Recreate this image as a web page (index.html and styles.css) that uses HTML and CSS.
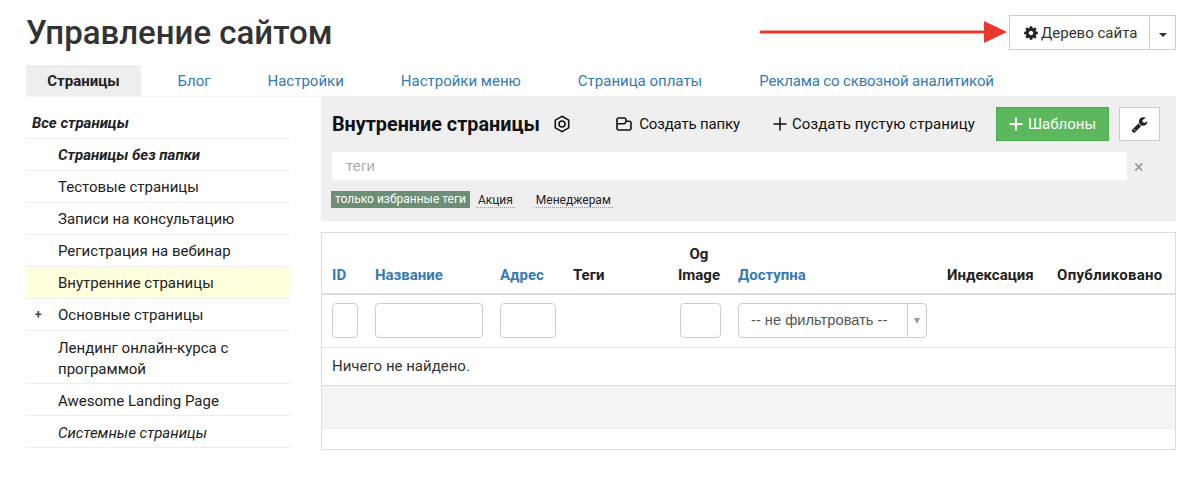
FILE: index.html
```html
<!DOCTYPE html>
<html lang="ru">
<head>
<meta charset="utf-8">
<title>Управление сайтом</title>
<link rel="stylesheet" href="styles.css">
</head>
<body>
<div class="page">
  <header class="top">
    <h1>Управление сайтом</h1>
    <div class="split">
      <a class="split-main"><svg class="gear" viewBox="0 0 1792 1792"><path d="M1152 896q0-106-75-181t-181-75-181 75-75 181 75 181 181 75 181-75 75-181zm512-109v222q0 12-8 23t-20 13l-185 28q-19 54-39 91 35 50 107 138 10 12 10 25t-9 23q-27 37-99 108t-94 71q-12 0-26-9l-138-108q-44 23-91 38-16 136-29 186-7 28-36 28h-222q-14 0-24.500-8.500t-11.500-21.500l-28-184q-49-16-90-37l-141 107q-10 9-25 9-14 0-25-11-126-114-165-168-7-10-7-23 0-12 8-23 15-21 51-66.500t54-70.500q-27-50-41-99l-183-27q-13-2-21-12.500t-8-23.500v-222q0-12 8-23t19-13l186-28q14-46 39-92-40-57-107-138-10-12-10-24 0-10 9-23 26-36 98.500-107.500t94.500-71.500q13 0 26 10l138 107q44-23 91-38 16-136 29-186 7-28 36-28h222q14 0 24.500 8.500t11.500 21.500l28 184q49 16 90 37l142-107q9-9 24-9 13 0 25 10 129 119 165 170 7 8 7 22 0 12-8 23-15 21-51 66.500t-54 70.500q26 50 41 98l183 28q13 2 21 12.500t8 23.500z"/></svg>Дерево сайта</a>
      <a class="split-caret"><span class="caret"></span></a>
    </div>
    <svg class="arrow" viewBox="0 0 250 26"><path d="M2 13H226" stroke="#e8392e" stroke-width="3" stroke-linecap="round"/><path d="M225 2L248 13L225 24Z" fill="#e8392e"/></svg>
  </header>

  <nav class="tabs">
    <a class="tab active">Страницы</a>
    <a class="tab">Блог</a>
    <a class="tab">Настройки</a>
    <a class="tab">Настройки меню</a>
    <a class="tab">Страница оплаты</a>
    <a class="tab narrow">Реклама со сквозной аналитикой</a>
  </nav>

  <div class="layout">
    <aside class="side">
      <a class="row root strong-it">Все страницы</a>
      <a class="row strong-it">Страницы без папки</a>
      <a class="row">Тестовые страницы</a>
      <a class="row">Записи на консультацию</a>
      <a class="row">Регистрация на вебинар</a>
      <a class="row current">Внутренние страницы</a>
      <a class="row"><span class="plus">+</span>Основные страницы</a>
      <a class="row">Лендинг онлайн-курса с программой</a>
      <a class="row">Awesome Landing Page</a>
      <a class="row it">Системные страницы</a>
    </aside>

    <main class="main">
      <section class="panel">
        <div class="panel-head">
          <h2>Внутренние страницы</h2>
          <svg class="hex" viewBox="0 0 18 18" fill="none" stroke="#111" stroke-width="1.6"><path d="M9 1.3L15.7 5.1V12.900L9 16.700L2.300 12.900V5.100Z"/><circle cx="9" cy="9" r="3"/></svg>
          <a class="act first"><svg class="folder" viewBox="0 0 16 14" fill="none" stroke="#111" stroke-width="1.600" stroke-linejoin="round"><path d="M1 11V3Q1 1 3 1H8.500Q9.500 1 9.800 2.200L10.300 4.200H13Q15 4.200 15 6V11Q15 13 13 13H3Q1 13 1 11ZM1 6.800H8Q8.800 6.800 9.200 6L10.300 4.200"/></svg>Создать папку</a>
          <a class="act second"><svg class="cross" viewBox="0 0 14 14" stroke="#111" stroke-width="1.500"><path d="M7 0.500V13.500M0.500 7H13.500"/></svg>Создать пустую страницу</a>
          <a class="btn-green"><svg class="cross-w" viewBox="0 0 14 14" stroke="#fff" stroke-width="2"><path d="M7 0.500V13.500M0.500 7H13.500"/></svg>Шаблоны</a>
          <a class="btn-tool"><svg class="wrench" viewBox="0 0 1792 1792"><path d="M448 1472q0-26-19-45t-45-19-45 19-19 45 19 45 45 19 45-19 19-45zm644-420l-682 682q-37 37-90 37-52 0-91-37l-106-108q-38-36-38-90 0-53 38-91l681-681q39 98 114.500 173.500t173.500 114.500zm634-435q0 39-23 106-47 134-164.500 217.500t-258.500 83.500q-185 0-316.500-131.500t-131.500-316.500 131.500-316.500 316.500-131.500q58 0 121.500 16.500t107.500 46.500q16 11 16 28t-16 28l-293 169v224l193 107q5-3 79-48.500t135.500-81 70.500-35.500q15 0 23.500 10t8.500 25z"/></svg></a>
        </div>
        <div class="search">
          <div class="search-input">теги</div>
          <span class="clear">×</span>
        </div>
        <div class="tags">
          <span class="badge">только избранные теги</span>
          <span class="tag">Акция</span>
          <span class="tag">Менеджерам</span>
        </div>
      </section>

      <section class="grid-box">
        <table>
          <colgroup>
            <col class="c1"><col class="c2"><col class="c3"><col class="c4"><col class="c5"><col class="c6"><col class="c7"><col class="c8">
          </colgroup>
          <thead>
            <tr class="head">
              <th class="link">ID</th>
              <th class="link">Название</th>
              <th class="link">Адрес</th>
              <th>Теги</th>
              <th class="og">Og Image</th>
              <th class="link">Доступна</th>
              <th>Индексация</th>
              <th class="pub">Опубликовано</th>
            </tr>
            <tr class="filters">
              <td><div class="field"></div></td>
              <td><div class="field"></div></td>
              <td><div class="field"></div></td>
              <td></td>
              <td><div class="field"></div></td>
              <td><div class="select"><span class="select-text">-- не фильтровать --</span><span class="select-arrow"><i></i></span></div></td>
              <td></td>
              <td></td>
            </tr>
          </thead>
          <tbody>
            <tr class="empty"><td colspan="8">Ничего не найдено.</td></tr>
          </tbody>
        </table>
        <div class="foot"></div>
      </section>
    </main>
  </div>
</div>
</body>
</html>
```
FILE: styles.css
```css
* { box-sizing: border-box; }
html, body { margin: 0; padding: 0; background: #fff; }
body { font-family: Roboto, "Noto Sans", sans-serif; font-size: 15px; color: #222; }
.page { width: 1200px; height: 483px; padding: 0 24px 0 26px; overflow: hidden; }

.top { position: relative; display: flex; justify-content: space-between; height: 65px; padding-top: 15px; }
h1 { margin: 0; font-size: 33px; line-height: 36px; font-weight: 500; color: #333; }
.split { display: flex; width: 167px; height: 35px; border: 1px solid #ccc; }
.split-main { display: flex; align-items: center; width: 140px; padding-left: 13px; border-right: 1px solid #ccc; color: #333; }
.gear { width: 16px; height: 16px; margin-right: 2px; fill: #222; }
.split-caret { flex: 1; display: flex; align-items: center; justify-content: center; padding-top: 4px; }
.caret { border: 4px solid transparent; border-top-color: #333; border-bottom: 0; }
.arrow { position: absolute; left: 733px; top: 19px; width: 250px; height: 26px; }

.tabs { display: flex; height: 32px; gap: 16px; border-bottom: 1px solid #f3f3f3; }
.tab { display: flex; align-items: center; height: 31px; padding: 0 20.500px; color: #337ab7; }
.tab.active { width: 115px; justify-content: center; padding: 0; background: #eee; color: #222; font-weight: 700; }
.tab.narrow { letter-spacing: -0.15px; }

.layout { display: flex; gap: 31px; }
.side { width: 264px; flex: none; }
.row { position: relative; display: block; padding: 6px 6px 4px 32px; line-height: 21px; border-bottom: 1px solid #eee; color: #222; }
.row:nth-child(n+8) { padding-top: 7px; padding-bottom: 3px; }
.root { padding-left: 6px; padding-top: 16px; padding-bottom: 5px; height: 42px; }
.strong-it { font-style: italic; font-weight: 700; }
.it { font-style: italic; }
.current { background: #ffffdd; }
.plus { position: absolute; left: 9px; top: 6px; font-size: 12px; font-weight: 700; color: #444; }

.main { flex: 1; min-width: 0; }
.panel { height: 124px; background: #efefef; padding: 10px 16px 0 11px; }
.panel-head { display: flex; align-items: center; height: 34px; color: #111; }
h2 { margin: 0; font-size: 19.800px; font-weight: 700; color: #111; }
.hex { width: 18px; height: 18px; margin-left: 13px; }
.act { display: flex; align-items: center; }
.act.first { margin-left: auto; letter-spacing: -0.15px; }
.act.second { margin-left: 33px; letter-spacing: 0.09px; }
.folder { width: 16px; height: 14px; margin-right: 7px; }
.cross { width: 14px; height: 14px; margin-right: 5px; }
.btn-green { display: flex; align-items: center; justify-content: center; width: 113px; height: 34px; margin-left: 21px; background: #5cb85c; border: 1px solid #4cae4c; color: #fff; }
.cross-w { width: 14px; height: 14px; margin-right: 5px; }
.btn-tool { display: flex; align-items: center; justify-content: center; width: 41px; height: 34px; margin-left: 10px; background: #fff; border: 1px solid #ccc; }
.wrench { width: 17px; height: 17px; fill: #222; }

.search { display: flex; align-items: center; height: 28px; margin-top: 11px; }
.search-input { width: 795px; height: 28px; padding-left: 14px; background: #fff; font-family: "Liberation Sans", sans-serif; font-size: 15px; line-height: 28px; color: #aaa; }
.clear { margin-left: 7px; padding-top: 2px; font-size: 18px; line-height: 26px; color: #999; }

.tags { display: flex; align-items: flex-start; margin-top: 11px; margin-left: -1px; font-size: 12px; }
.badge { padding: 0 4px; height: 17px; line-height: 17px; background: #6b8e75; color: #fff; }
.tag { margin-left: 6px; padding: 0 2px; height: 17px; line-height: 19px; color: #222; border-bottom: 1px dotted #999; }
.tag:last-child { margin-left: 19px; }

.grid-box { height: 218px; margin-top: 11px; padding-top: 2px; border: 1px solid #ddd; }
table { width: 100%; table-layout: fixed; border-collapse: collapse; }
.c1 { width: 43px; } .c2 { width: 125px; } .c3 { width: 73px; } .c4 { width: 107px; }
.c5 { width: 58px; } .c6 { width: 209px; } .c7 { width: 110px; } .c8 { width: 128px; }
th { padding: 9px 10px 7px; vertical-align: bottom; text-align: left; font-size: 15px; line-height: 21px; font-weight: 700; color: #222; border-bottom: 2px solid #ddd; }
th.link { color: #337ab7; }
th.og { text-align: center; padding-left: 5px; padding-right: 5px; }
th.pub { padding-right: 0; letter-spacing: 0.3px; }
.filters td { height: 53px; padding: 8px 7px 8px 10px; border-bottom: 1px solid #e8e8e8; }
.field { height: 35px; background: #fff; border: 1px solid #ccc; border-radius: 4px; }
.select { display: flex; width: 189px; height: 35px; border: 1px solid #ccc; border-radius: 4px; font-family: "Liberation Sans", sans-serif; color: #555; }
.select-text { flex: 1; padding-left: 12px; line-height: 33px; font-size: 14.700px; white-space: nowrap; }
.select-arrow { display: flex; align-items: center; justify-content: center; width: 19px; border-left: 1px solid #ccc; }
.select-arrow i { border: 3.500px solid transparent; border-top: 6px solid #999; border-bottom: 0; }
.empty td { height: 38px; padding: 0 10px; border-bottom: 1px solid #ddd; color: #333; }
.foot { height: 43px; background: #f4f4f4; border-bottom: 1px solid #eee; }
```
